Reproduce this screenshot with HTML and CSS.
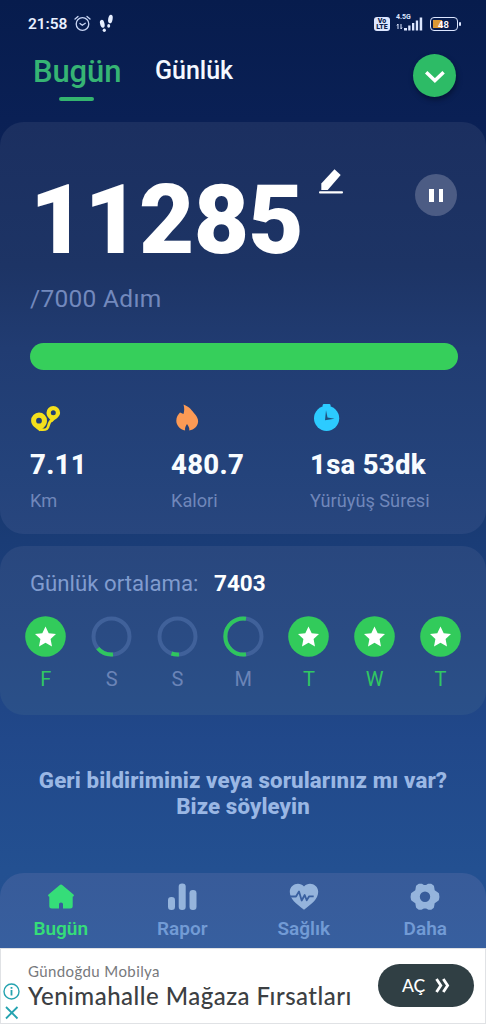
FILE: index.html
```html
<!DOCTYPE html>
<html lang="tr">
<head>
<meta charset="utf-8">
<title>Adım Sayar</title>
<link rel="stylesheet" href="styles.css">
</head>
<body>
<div class="app">
  <div class="status">
    <div class="status-left">
      <span class="clock">21:58</span>
      <svg class="alarm" width="17" height="17" viewBox="0 0 17 17" fill="none" stroke="#c9d6f5" stroke-width="1.3" stroke-linecap="round"><circle cx="8.5" cy="9" r="6.3"/><path d="M1 4 4 1.4M16 4l-3-2.6M6 8.4l2.3 1.9 3-2"/></svg>
      <svg class="steps" width="15" height="19" viewBox="0 0 15 19" fill="#e6eeff"><ellipse cx="3.3" cy="9.8" rx="2.2" ry="4" transform="rotate(-14 3.3 9.8)"/><ellipse cx="5.3" cy="16.2" rx="1.6" ry="1.8"/><ellipse cx="11.4" cy="5" rx="2.2" ry="4.4" transform="rotate(10 11.4 5)"/><ellipse cx="9.7" cy="11.9" rx="1.5" ry="1.8"/></svg>
    </div>
    <div class="status-right">
      <span class="volte"><b>Vo</b><b>LTE</b></span>
      <span class="signal"><small>4.5G</small>
        <svg width="27" height="14" viewBox="0 0 27 14" fill="#dce6ff"><path d="M2 7v5M1 8.500l1-1.500M5 7v5M5 12l1-1.500" stroke="#dce6ff" fill="none"/><rect x="8" y="11" width="3" height="2.500"/><rect x="12.200" y="8.500" width="2.300" height="5"/><rect x="16" y="6" width="2.300" height="7.500"/><rect x="19.800" y="3.500" width="2.300" height="10"/><rect x="23.700" y="0.500" width="2.500" height="13"/></svg>
      </span>
      <span class="battery"><i></i><span>48</span></span>
    </div>
  </div>

  <div class="tabs">
    <div class="tab tab-on">Bugün</div>
    <div class="tab">Günlük</div>
    <div class="drop"><svg width="43" height="43" viewBox="0 0 43 43" fill="none" stroke="#fff" stroke-width="3.500"><path d="m13.200 18.300 8.700 8.200 8.700-8.200"/></svg></div>
  </div>

  <section class="card today">
    <div class="count-row">
      <div class="count">11285</div>
      <svg class="edit" width="25" height="26" viewBox="0 0 25 26" fill="#fff"><path d="M2.300 20v-6.500L15.500-.8l6.200 5.700L8.700 20z"/><rect y="21.300" width="24" height="2.300" rx="1"/></svg>
      <div class="pause"><i></i><i></i></div>
    </div>
    <div class="goal">/7000 Adım</div>
    <div class="bar"></div>
    <div class="stats">
      <div class="stat">
        <svg width="32" height="28" viewBox="0 0 32 28"><path d="M9.500 25.500c13 2 6-6 12.500-9.500" fill="none" stroke="#f4e01c" stroke-width="2.600"/><path fill="#f4e01c" fill-rule="evenodd" d="M9 8.500a8 8 0 0 0-7.900 8.200c0 5 5 7.300 8.500 10.500 3.200-3 7.400-5.600 7.400-10.500A8 8 0 0 0 9 8.500zm0 5.300a2.900 2.900 0 1 1 0 5.800 2.900 2.900 0 0 1 0-5.800zM23.300 2a6.800 6.800 0 0 0-6.800 6.800c0 4.200 3.500 6.200 5.700 9.200 3-3 7.900-4.800 7.900-9.200A6.800 6.800 0 0 0 23.300 2zm0 4.300a2.500 2.500 0 1 1 0 5 2.500 2.500 0 0 1 0-5z"/></svg>
        <strong>7.11</strong><span>Km</span>
      </div>
      <div class="stat">
        <svg width="32" height="28" viewBox="0 0 32 28" fill="#fc9a55"><path d="M12.500.500c6 2.300 8.500 6 11.500 9.800 2 2.500 3.300 4.800 3.100 7.200-.200 4.500-4 8.300-8.800 9 .4-3-1-4.500-2.300-6.500-1.300 2.200-2.300 3.500-1.900 6.500-5.100-1-8.800-5-8.800-9.700 0-3.600 1.700-6 3.700-8.200l3.500 1.300c.900-2.600 1-6 0-9.400z"/></svg>
        <strong>480.7</strong><span>Kalori</span>
      </div>
      <div class="stat">
        <svg width="32" height="28" viewBox="0 0 32 28"><g fill="#2ccbff"><rect x="12.700" y="0" width="7.800" height="5" rx="1.200"/><circle cx="16.600" cy="14.300" r="12.600"/></g><path d="m16 6.300-1 9.900 9.500-1.400-7-1.200z" fill="#20517f"/></svg>
        <strong>1sa 53dk</strong><span>Yürüyüş Süresi</span>
      </div>
    </div>
  </section>

  <section class="card week">
    <div class="avg"><span>Günlük ortalama:</span><strong>7403</strong></div>
    <div class="days">
      <div class="day done"><svg viewBox="0 0 41 41"><circle cx="20.500" cy="20.500" r="20.300"/><path d="m20.500 10.500 3.200 6.700 7.300.9-5.400 5 1.400 7.300-6.500-3.600-6.500 3.600 1.400-7.300-5.400-5 7.300-.9z"/></svg><span>F</span></div>
      <div class="day"><svg viewBox="0 0 41 41"><circle class="ring" cx="20.500" cy="20.500" r="18"/><path class="arc" d="M22 38.430A18 18 0 0 1 6.800 32.200"/></svg><span>S</span></div>
      <div class="day"><svg viewBox="0 0 41 41"><circle class="ring" cx="20.500" cy="20.500" r="18"/><path class="arc" d="M22 38.430A18 18 0 0 1 14.500 37.500"/></svg><span>S</span></div>
      <div class="day"><svg viewBox="0 0 41 41"><circle class="ring" cx="20.500" cy="20.500" r="18"/><path class="arc" d="M23 38.300A18 18 0 1 1 23 2.700"/></svg><span>M</span></div>
      <div class="day done"><svg viewBox="0 0 41 41"><circle cx="20.500" cy="20.500" r="20.300"/><path d="m20.500 10.500 3.200 6.700 7.300.9-5.400 5 1.400 7.300-6.500-3.600-6.500 3.600 1.400-7.300-5.400-5 7.300-.9z"/></svg><span>T</span></div>
      <div class="day done"><svg viewBox="0 0 41 41"><circle cx="20.500" cy="20.500" r="20.300"/><path d="m20.500 10.500 3.200 6.700 7.300.9-5.400 5 1.400 7.300-6.500-3.600-6.500 3.600 1.400-7.300-5.400-5 7.300-.9z"/></svg><span>W</span></div>
      <div class="day done"><svg viewBox="0 0 41 41"><circle cx="20.500" cy="20.500" r="20.300"/><path d="m20.500 10.500 3.200 6.700 7.300.9-5.400 5 1.400 7.300-6.500-3.600-6.500 3.600 1.400-7.300-5.400-5 7.300-.9z"/></svg><span>T</span></div>
    </div>
  </section>

  <div class="feedback">Geri bildiriminiz veya sorularınız mı var?<br>Bize söyleyin</div>

  <nav class="nav">
    <div class="item item-on"><svg width="32" height="28" viewBox="0 0 32 28"><path d="M14.500 2.200q1.500-1.200 3 0L28.500 11.500q1.200 1.700-.8 2.200V23q0 2.500-2.500 2.500h-7.200V21q0-1.500-2-1.500t-2 1.500v4.500H6.800Q4.300 25.500 4.300 23V13.700q-2-.5-.8-2.200z"/></svg><span>Bugün</span></div>
    <div class="item"><svg width="32" height="28" viewBox="0 0 32 28"><rect x="2" y="14" width="7" height="13" rx="3.300"/><rect x="12.700" y=".5" width="7" height="26.500" rx="3.300"/><rect x="23.500" y="7" width="7" height="20" rx="3.300"/></svg><span>Rapor</span></div>
    <div class="item"><svg width="32" height="28" viewBox="0 0 32 28"><path d="M16 26.700C8 20.500 1.800 16 1.800 8.700 1.800 1 11.500-2 16 3.500 20.500-2 30.200 1 30.200 8.700 30.200 16 24 20.500 16 26.700z"/><path d="M2 13.500h6l3-5 2.700 9 3-5.500 2 5.300 2.500-4h4.500" fill="none" stroke="#3a60a0" stroke-width="1.800" stroke-linejoin="round"/></svg><span>Sağlık</span></div>
    <div class="item"><svg width="32" height="28" viewBox="0 0 32 28"><path stroke="#95b4dc" stroke-width="2" stroke-linejoin="round" fill-rule="evenodd" d="M10 1.700h2.500L14.800 3h2.400l2.300-1.300H22l2 1.500.8 4.600 4.200 3q.8 2.900 0 5.800l-4.200 3-.8 4.600-2 1.500h-2.500l-2.300-1.300h-2.400l-2.300 1.300H10l-2-1.500-.8-4.600-4.200-3q-.8-2.900 0-5.800l4.200-3L8 3.200zM16 7.500a6.200 6.200 0 1 0 0 12.400 6.200 6.200 0 0 0 0-12.400z"/></svg><span>Daha</span></div>
  </nav>

  <div class="ad">
    <div class="ad-marks">
      <svg width="17" height="17" viewBox="0 0 17 17" fill="none" stroke="#25a3b0" stroke-width="1.400"><circle cx="8.500" cy="8.500" r="7.500"/><path d="M8.500 7v5.500M8.500 4v1.700" stroke-width="1.800"/></svg>
      <svg width="17" height="17" viewBox="0 0 17 17" fill="none" stroke="#25a3b0" stroke-width="1.800"><path d="m3 3 11.500 11.500M14.500 3 3 14.500"/></svg>
    </div>
    <div class="ad-text"><span class="brand">Gündoğdu Mobilya</span><span class="headline">Yenimahalle Mağaza Fırsatları</span></div>
    <div class="open"><span>AÇ</span><svg width="15" height="15" viewBox="0 0 15 15" fill="none" stroke="#fff" stroke-width="2.800"><path d="m1.500 1 4.300 6.500L1.500 14M8.300 1l4.300 6.500L8.300 14"/></svg></div>
  </div>
</div>
</body>
</html>
```
FILE: styles.css
```css
* { box-sizing: border-box; }
body { margin: 0; font-family: Roboto, "Noto Sans", sans-serif; }
svg { display: block; flex: none; overflow: visible; }
.app {
  width: 486px; height: 1024px; overflow: hidden;
  display: flex; flex-direction: column;
  background: linear-gradient(#071c4d 0, #0a2055 120px, #163568 450px, #1a3c76 540px, #21488a 740px, #235091 870px, #245193 948px);
}
.status { height: 47px; display: flex; justify-content: space-between; padding: 0 28px 0 28px; }
.status-left, .status-right { display: flex; align-items: center; }
.clock { color: #e9f0ff; font-size: 15.500px; font-weight: 600; line-height: 20px; width: 46px; white-space: nowrap; letter-spacing: -.1px; padding-top: 1px; }
.steps { margin-left: 8px; }
.volte {
  width: 16px; height: 14px; border-radius: 3px; background: #dce6ff; color: #0a1c4b;
  font-size: 7px; line-height: 6px; padding: 1px; overflow: hidden;
  display: flex; flex-direction: column; align-items: center; margin-right: 6px;
}
.volte b { font-weight: 900; }
.signal { display: flex; flex-direction: column; color: #dce6ff; height: 18px; margin-right: 7px; }
.signal small { font-size: 7px; line-height: 4px; height: 2px; font-weight: 700; }
.battery {
  width: 28px; height: 14px; border: 1.500px solid #dce6ff; border-radius: 4px; color: #fff;
  font-size: 9.500px; font-weight: 600; padding: 2px;
  display: flex; position: relative;
}
.battery i { width: 9px; background: #d99834; }
.battery span { margin-left: -4px; line-height: 9px; }
.battery::after { content: ""; position: absolute; right: -4px; top: 4px; width: 2px; height: 4px; background: #dce6ff; border-radius: 1px; }

.tabs { height: 75px; display: flex; padding: 7px 30px 0 33px; }
.tab { color: #f5f9ff; font-size: 25px; font-weight: 500; line-height: 33px; white-space: nowrap; }
.tab-on {
  color: #36b474; font-size: 31px; line-height: 36px; width: 122px; letter-spacing: -.1px;
}
.tab-on::after { content: ""; display: block; width: 35px; height: 4px; margin: 7px 0 0 26px; border-radius: 2px; background: #34b46f; }
.drop { margin-left: auto; width: 43px; height: 43px; border-radius: 50%; background: #2dbb66; box-shadow: 1px 3px 5px rgba(0,10,30,.5); }

.card { border-radius: 24px; }
.today {
  height: 412px; padding: 48px 28px 0 30px;
  background: linear-gradient(#1b2f60, #1d3465 35%, #213c72 55%, #24437b 85%, #28467e);
}
.count-row { height: 100px; display: flex; }
.count { color: #fff; font-size: 95.500px; line-height: 101px; font-weight: 900; width: 289px; letter-spacing: -.800px; }
.pause {
  width: 42px; height: 42px; border-radius: 50%; background: #4c5c84; margin: 4px 1px 0 auto;
  display: flex; justify-content: center; align-items: center; gap: 5px;
}
.pause i { width: 4.500px; height: 13px; background: #fff; }
.goal { color: #7389bd; font-size: 24.500px; line-height: 32px; height: 30px; font-weight: 400; letter-spacing: .3px; margin-top: 13px; }
.bar { height: 27px; border-radius: 14px; background: #36cf5b; margin-top: 30px; }
.stats { display: grid; grid-template-columns: 141px 139px 1fr; margin-top: 34px; }
.stat { display: flex; flex-direction: column; }
.stat strong { color: #f8fcff; font-size: 27.500px; line-height: 35px; height: 34px; font-weight: 800; margin-top: 15px; white-space: nowrap; letter-spacing: .3px; }
.stat span { color: #7087ba; font-size: 18.200px; line-height: 24px; font-weight: 400; margin-top: 8px; white-space: nowrap; }

.week {
  height: 169px; margin-top: 12px; padding: 22px 13px 0;
  background: linear-gradient(#29477e, #2a4b83 50%, #2a5089);
}
.avg { display: flex; padding-left: 17px; line-height: 31px; height: 30px; font-size: 22.200px; }
.avg span { color: #819ccf; font-weight: 400; width: 184px; white-space: nowrap; }
.avg strong { color: #fff; font-weight: 750; font-size: 22.500px; }
.days { display: grid; grid-template-columns: repeat(7, 65.750px); margin-top: 18px; }
.day { display: flex; flex-direction: column; align-items: center; color: #6b84b7; font-size: 20px; font-weight: 400; line-height: 26px; }
.day svg { width: 41px; height: 41px; margin-bottom: 9px; }
.done { color: #31c762; }
.done circle { fill: #32cb5b; }
.done path { fill: #fff; }
.ring { fill: none; stroke: #40619a; stroke-width: 4; }
.arc { fill: none; stroke: #2fc65e; stroke-width: 4; }

.feedback { height: 158px; padding-top: 52px; text-align: center; color: #9ab7e4; font-size: 22.300px; line-height: 26px; font-weight: 800; letter-spacing: .1px; }

.nav {
  height: 75px; border-radius: 24px 24px 0 0; display: grid; grid-template-columns: repeat(4, 121.500px);
  padding-top: 10px; background: linear-gradient(#385b99, #375f9f);
}
.item { display: flex; flex-direction: column; align-items: center; color: #729bd5; font-size: 19px; font-weight: 650; line-height: 24px; gap: 6px; }
.item svg { fill: #95b4dc; }
.item-on { color: #35dd79; }
.item-on svg { fill: #35dd79; }

.ad { height: 76px; background: #fff; border: 1px solid #e0e2e5; display: flex; padding-right: 11px; }
.ad-marks { width: 27px; padding: 34px 0 0 2px; display: flex; flex-direction: column; gap: 4px; }
.ad-text { display: flex; flex-direction: column; white-space: nowrap; font-family: Lato, sans-serif; padding-top: 12px; }
.brand { color: #77797c; font-size: 15px; line-height: 20px; letter-spacing: .4px; }
.headline { color: #3c4043; font-size: 24px; line-height: 29px; font-weight: 500; letter-spacing: .48px; }
.open {
  width: 96px; height: 43px; border-radius: 22px; background: #303f44; margin: 15px 0 0 auto; color: #fff;
  font-family: Lato, sans-serif; font-size: 17.500px; font-weight: 500; display: flex; align-items: center; justify-content: center; gap: 10px;
}
```
